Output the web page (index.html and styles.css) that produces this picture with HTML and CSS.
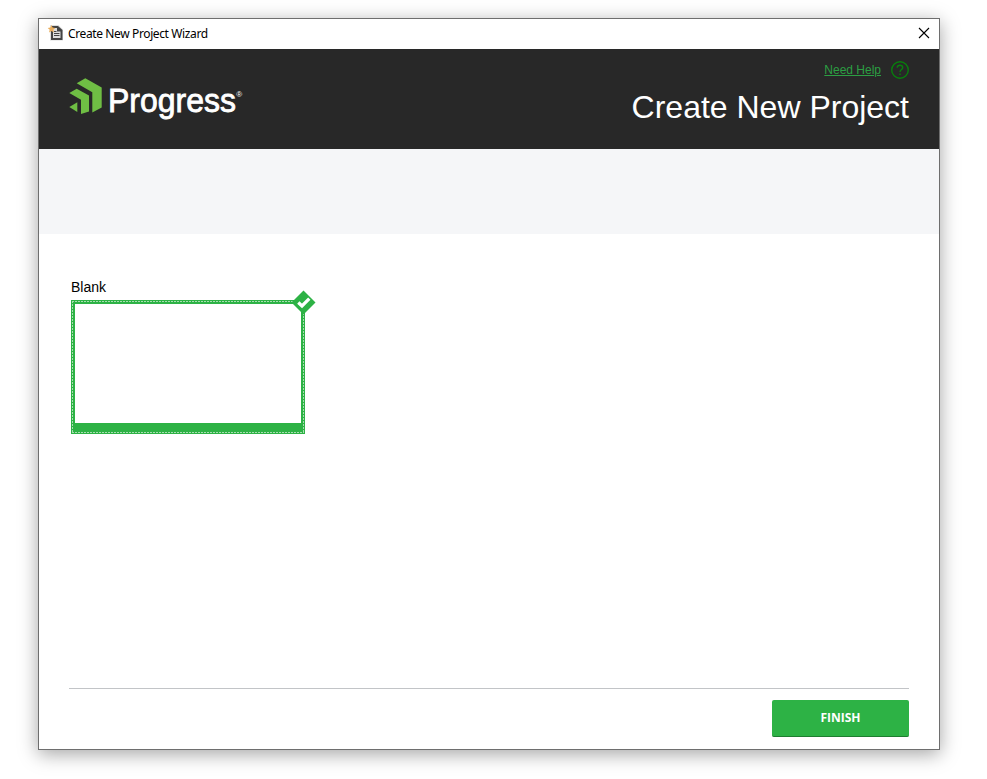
FILE: index.html
```html
<!DOCTYPE html>
<html lang="en">
<head>
<meta charset="utf-8">
<title>Create New Project Wizard</title>
<link rel="stylesheet" href="styles.css">
</head>
<body>
<main class="window">
  <div class="titlebar">
    <svg class="app-icon" width="16" height="16" viewBox="0 0 16 16">
      <path d="M2 0H10.500L15 4.500V15.500H2Z" fill="#dedede"/>
      <path fill-rule="evenodd" d="M3 1H10L14.500 5V15H3ZM5 3V13H12.500V6.500H9V3Z" fill="#444"/>
      <path d="M6 6.500H8.500M6 8.500H11.500M6 10.500H11.500" stroke="#444"/>
      <path d="M3.500 0L4.600 2.600L7.300 2.900L5.300 4.700L6 7.500L3.500 6L1 7.500L1.700 4.700L-.3 2.900L2.400 2.600Z" fill="#e9ad5c"/>
    </svg>
    <span class="window-title">Create New Project Wizard</span>
    <svg class="close" width="12" height="12" viewBox="0 0 12 12"><path d="M1 1L11 11M11 1L1 11" stroke="#000" stroke-width="1.1"/></svg>
  </div>
  <header class="header">
    <svg class="logo" width="175" height="46" viewBox="69 77 175 46">
      <g fill="#6fbe44">
        <path d="M76.700 83.200L85.300 78.200L101.700 87.400V107.500L92.300 112.500V92.200Z"/>
        <path d="M69.300 93L76.700 88.700L89 95.600V111.500L81 114V99.800Z"/>
        <path d="M69.300 107L77.300 102.300V112Z"/>
      </g>
      <text class="wordmark" x="108" y="112" textLength="128" lengthAdjust="spacingAndGlyphs">Progress</text>
      <text class="registered" x="236.300" y="96.500">®</text>
    </svg>
    <div class="heading">
      <div class="help">
        <a class="help-link">Need Help</a>
        <svg class="help-icon" width="18" height="18" viewBox="0 0 18 18"><circle cx="9" cy="9" r="8.300"/><path d="M6.200 6.800C6.300 5 7.400 4.200 9 4.200S11.700 5.200 11.700 6.700C11.700 8.500 9 8.700 9 11M9 12.500V14"/></svg>
      </div>
      <h1 class="title">Create New Project</h1>
    </div>
  </header>
  <div class="band"></div>
  <section class="content">
    <div class="template-name">Blank</div>
    <div class="template">
      <svg class="focus" width="234" height="134" viewBox="0 0 234 134"><path d="M1 1.500H233M1 132.500H233M1.500 1V133M232.500 1V133"/></svg>
      <svg class="check" width="25" height="25" viewBox="0 0 25 25"><path d="M12.500 .5L24.500 12.500L12.500 24.500L.5 12.500Z" fill="#2db245"/><path d="M7.300 12.500L11 16L18.300 8.700" fill="none" stroke="#fff" stroke-width="3.300"/></svg>
    </div>
  </section>
  <footer class="footer"><button class="finish">FINISH</button></footer>
</main>
</body>
</html>
```
FILE: styles.css
```css
* { box-sizing: border-box; }
body {
  margin: 0;
  height: 779px;
  padding: 18px 0 0 38px;
  overflow: hidden;
  background: #fff;
  color: #000;
  font-family: "Liberation Sans", Arial, sans-serif;
}
.window {
  width: 902px;
  height: 732px;
  display: flex;
  flex-direction: column;
  border: 1px solid #6e6e6e;
  background: #fff;
  box-shadow: 0 4px 18px rgba(0, 0, 0, .36);
}
.titlebar {
  height: 30px;
  flex: none;
  display: flex;
  align-items: center;
  padding: 0 9px 2px 9px;
}
.app-icon { overflow: visible; }
.window-title {
  margin-left: 4px;
  font: 12px "Noto Sans", sans-serif;
  letter-spacing: -.38px;
}
.close { margin-left: auto; }
.header {
  height: 100px;
  flex: none;
  display: flex;
  justify-content: space-between;
  padding: 0 30px;
  background: #282828;
}
.logo { margin-top: 28px; }
.wordmark { fill: #fff; stroke: #fff; stroke-width: .8px; font-size: 32.5px; }
.registered { fill: #fff; font-size: 8px; }
.help {
  display: flex;
  justify-content: flex-end;
  align-items: center;
  gap: 10px;
  height: 18px;
  margin-top: 12px;
}
.help-link { color: #2c9f43; font-size: 12px; text-decoration: underline; }
.help-icon { fill: none; stroke: #087f0d; stroke-width: 1.400px; }
.title {
  margin: 9px 0 0;
  color: #fff;
  font-size: 32px;
  font-weight: 400;
  line-height: 38px;
  white-space: nowrap;
}
.band { height: 85px; flex: none; background: #f5f6f8; }
.content { flex: 1; padding: 44px 32px 0; }
.template-name { height: 22px; font-size: 14px; line-height: 18px; }
.template {
  position: relative;
  width: 234px;
  height: 134px;
  border: 4px solid #2db245;
  border-bottom-width: 11px;
}
.focus {
  position: absolute;
  left: -4px;
  top: -4px;
  fill: none;
  stroke: #a6deaf;
  stroke-dasharray: 2 1;
}
.check { position: absolute; left: 216px; top: -14px; }
.footer {
  height: 61px;
  flex: none;
  margin: 0 30px;
  padding-top: 11px;
  border-top: 1px solid #c2c4c7;
  text-align: right;
}
.finish {
  display: block;
  width: 137px;
  height: 37px;
  margin-left: auto;
  padding: 0 0 2px;
  border: 0;
  border-bottom: 1px solid #1e7d30;
  border-radius: 2px;
  background: #2db245;
  color: #fff;
  font: 700 12px "Open Sans", sans-serif;
}
```
